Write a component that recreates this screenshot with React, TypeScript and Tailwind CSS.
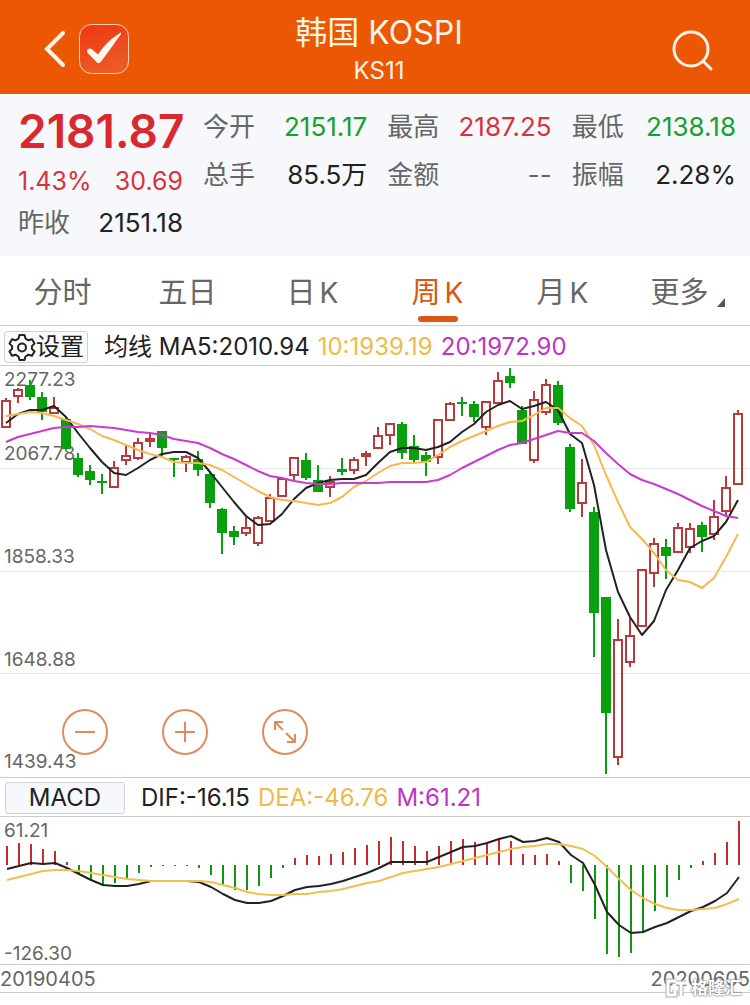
import { useState } from 'react';

type Candle = [up: 0 | 1, high: number, top: number, bottom: number, low: number];

// Chart positions, one entry per week
const CANDLES: Candle[] = [
  [1, 398, 400, 428, 428], [1, 388, 389, 397, 403], [0, 380, 385, 397, 400], [0, 392, 397, 412, 420],
  [1, 397, 407, 414, 414], [0, 417, 419, 449, 449], [0, 453, 458, 475, 477], [0, 465, 471, 480, 485],
  [0, 474, 481, 483, 494], [1, 461, 467, 488, 488], [1, 445, 455, 461, 465], [1, 438, 442, 459, 460],
  [1, 433, 438, 442, 447], [0, 431, 431, 448, 458], [0, 458, 458, 460, 477], [1, 455, 456, 463, 472],
  [0, 451, 459, 470, 476], [0, 472, 474, 503, 508], [0, 508, 509, 533, 554], [0, 526, 531, 537, 545],
  [1, 517, 527, 534, 536], [1, 516, 517, 544, 546], [1, 494, 497, 522, 522], [1, 478, 478, 497, 497],
  [1, 457, 457, 476, 480], [0, 453, 460, 478, 480], [0, 465, 480, 492, 492], [1, 476, 481, 488, 497],
  [0, 458, 469, 472, 475], [1, 457, 459, 471, 474], [1, 451, 453, 457, 466], [1, 427, 435, 449, 449],
  [1, 423, 423, 436, 445], [0, 422, 424, 453, 459], [0, 435, 446, 460, 462], [0, 452, 455, 462, 476],
  [1, 419, 419, 458, 464], [1, 402, 403, 421, 421], [0, 397, 402, 404, 416], [0, 401, 404, 417, 422],
  [1, 401, 401, 428, 435], [1, 372, 380, 404, 404], [0, 368, 376, 383, 388], [0, 406, 410, 444, 444],
  [1, 391, 399, 461, 463], [1, 379, 384, 413, 415], [0, 381, 385, 423, 425], [0, 444, 447, 509, 512],
  [1, 459, 482, 504, 517], [0, 507, 512, 613, 657], [0, 597, 597, 713, 774], [1, 619, 639, 758, 765],
  [1, 618, 635, 663, 667], [1, 569, 569, 627, 627], [1, 538, 543, 574, 587], [0, 539, 547, 556, 579],
  [1, 523, 527, 553, 553], [1, 523, 528, 548, 553], [0, 522, 525, 537, 552], [1, 500, 516, 535, 540],
  [1, 476, 487, 512, 516], [1, 410, 413, 485, 485],
];

const MA5 = [
  423, 414, 410, 410, 406, 417, 433, 448, 462, 473, 475, 468, 460, 454, 452, 452, 458, 472, 487, 502, 516,
  525, 524, 514, 499, 488, 483, 480, 479, 479, 475, 463, 452, 448, 448, 450, 447, 442, 432, 424, 412, 405,
  401, 409, 406, 402, 410, 434, 443, 485, 550, 592, 617, 635, 621, 590, 570, 548, 541, 536, 522, 500,
];
const MA10 = [
  416, 414, 412, 413, 416, 420, 424, 429, 436, 440, 445, 450, 454, 457, 462, 463, 463, 465, 470, 477, 484,
  491, 497, 500, 501, 503, 505, 503, 497, 487, 481, 473, 466, 463, 463, 462, 455, 447, 441, 436, 431, 426,
  422, 421, 415, 408, 408, 418, 426, 445, 475, 502, 527, 539, 553, 570, 580, 582, 588, 578, 557, 534,
];
const MA20 = [
  442, 437, 434, 431, 428, 427, 427, 426, 427, 428, 430, 432, 433, 435, 439, 441, 443, 448, 454, 459, 465,
  471, 476, 478, 481, 483, 484, 484, 483, 483, 483, 483, 482, 482, 482, 482, 480, 475, 468, 462, 456, 450,
  445, 443, 439, 435, 431, 433, 433, 441, 453, 464, 474, 480, 484, 489, 494, 500, 506, 511, 516, 518,
];

const ZERO = 865;
const BARS = [
  846, 843, 844, 849, 851, 862, 874, 880, 885, 883, 878, 873, 867, 866, 866, 866, 868, 875, 884, 890, 890,
  886, 878, 868, 858, 855, 856, 854, 852, 848, 845, 841, 837, 841, 846, 851, 846, 841, 839, 842, 843, 838,
  841, 854, 855, 854, 861, 883, 891, 919, 954, 957, 953, 932, 911, 897, 880, 868, 861, 853, 842, 821,
];
const DIF = [
  869, 866, 863, 864, 863, 868, 874, 880, 885, 886, 886, 884, 881, 881, 881, 881, 882, 887, 894, 900, 903,
  903, 901, 896, 890, 887, 886, 884, 881, 877, 873, 868, 862, 862, 862, 862, 857, 852, 847, 846, 843, 839,
  836, 842, 841, 838, 842, 855, 863, 885, 912, 925, 933, 932, 927, 923, 917, 911, 907, 901, 893, 877,
];
const DEA = [
  880, 877, 874, 871, 870, 870, 871, 873, 875, 877, 879, 880, 881, 881, 881, 881, 881, 882, 885, 888, 892,
  894, 895, 895, 894, 894, 892, 891, 889, 886, 883, 881, 877, 873, 871, 869, 867, 864, 861, 858, 855, 852,
  849, 847, 846, 844, 844, 846, 849, 856, 867, 879, 890, 898, 904, 908, 910, 910, 909, 908, 904, 899,
];

const PRICE_LABELS: [string, number][] = [
  ['2277.23', 386],
  ['2067.78', 460],
  ['1858.33', 563],
  ['1648.88', 666],
  ['1439.43', 768],
];

const TABS = ['分时', '五日', '日K', '周K', '月K', '更多'];

const STATS = [
  { label: '今开', value: '2151.17', color: 'text-[#18a02a]' },
  { label: '最高', value: '2187.25', color: 'text-[#d7333c]' },
  { label: '最低', value: '2138.18', color: 'text-[#18a02a]' },
  { label: '总手', value: '85.5万', color: 'text-[#222]' },
  { label: '金额', value: '--', color: 'text-[#666]' },
  { label: '振幅', value: '2.28%', color: 'text-[#222]' },
];

const toPoints = (ys: number[], start: number) =>
  ys.map((y, i) => `${start + i * 12},${y}`).join(' ');

function Line({ ys, color, start }: { ys: number[]; color: string; start: number }) {
  return (
    <polyline
      points={toPoints(ys, start)}
      fill="none"
      stroke={color}
      strokeWidth="2"
      strokeLinejoin="round"
    />
  );
}

function Header() {
  return (
    <header className="flex h-[94px] items-center justify-between bg-[#eb5703] pr-9 pl-11 text-[#fff4e6]">
      <div className="flex flex-1 items-center gap-3">
        <button aria-label="返回" className="pt-1">
          <svg width="23" height="38" viewBox="0 0 23 38" fill="none" stroke="currentColor" strokeWidth="4">
            <path d="M19 3 3 19l16 16" strokeLinecap="round" strokeLinejoin="miter" />
          </svg>
        </button>
        <button aria-label="自选" className="pt-1">
          <svg width="50" height="50" viewBox="0 0 50 50">
            <defs>
              <linearGradient id="badge" x1="0" y1="0" x2="0.3" y2="1">
                <stop offset="0" stopColor="#ee3712" />
                <stop offset="1" stopColor="#ec5a26" />
              </linearGradient>
            </defs>
            <rect x="0.5" y="0.5" width="49" height="49" rx="12" fill="url(#badge)" stroke="#ffd3b0" />
            <path
              d="M8 27c0-2.500 3-3.500 5-1.700l6 5.200C25 21.500 32 14.500 41 9c1-.5 1.500.3 1 1.200C36 18 30 27 22 37.500c-1.300 2-3.500 2-5 0L8.700 29Q8 28 8 27Z"
              fill="#fff8ee"
            />
          </svg>
        </button>
      </div>
      <div className="pt-2 text-center">
        <h1 className="text-[32px] leading-10">韩国 KOSPI</h1>
        <p className="text-2xl leading-9">KS11</p>
      </div>
      <div className="flex flex-1 justify-end pt-2">
        <button aria-label="搜索">
          <svg width="42" height="42" viewBox="0 0 42 42" fill="none" stroke="currentColor" strokeWidth="3">
            <circle cx="19" cy="19" r="17" />
            <path d="m31 31 8 8" strokeLinecap="round" />
          </svg>
        </button>
      </div>
    </header>
  );
}

function Quote() {
  return (
    <section className="flex h-[162px] gap-4 bg-[#f6f8fb] pr-[14px] pl-[18px] text-[26px]">
      <div className="w-[169px] shrink-0">
        <div className="pt-2 text-[46px] leading-[58px] font-semibold text-[#d9282e]">2181.87</div>
        <div className="flex h-11 items-center justify-between pr-1 text-[25px] text-[#d7333c]">
          <span>1.43%</span>
          <span>30.69</span>
        </div>
        <dl className="flex h-9 items-center justify-between pr-1">
          <dt className="text-[#666]">昨收</dt>
          <dd className="text-[#222]">2151.18</dd>
        </dl>
      </div>
      <dl className="grid flex-1 grid-cols-3 content-start gap-x-5 pt-2">
        {STATS.map((s) => (
          <div key={s.label} className="flex h-12 items-center justify-between whitespace-nowrap">
            <dt className="text-[#666]">{s.label}</dt>
            <dd className={s.color}>{s.value}</dd>
          </div>
        ))}
      </dl>
    </section>
  );
}

function Tabs() {
  const [active, setActive] = useState('周K');

  return (
    <nav className="grid h-[70px] grid-cols-6 border-b border-[#ccc] text-[29px]">
      {TABS.map((tab) => (
        <button
          key={tab}
          onClick={() => setActive(tab)}
          className={`relative flex items-center justify-center gap-1 pt-1 ${
            tab === active ? 'text-[#d8590f]' : 'text-[#666]'
          }`}
        >
          {tab.endsWith('K') ? (
            <>
              <span>{tab[0]}</span>
              <span className="text-[28px]">K</span>
            </>
          ) : (
            <span>{tab}</span>
          )}
          {tab === '更多' && (
            <svg width="8" height="9" viewBox="0 0 8 9" className="ml-1 mt-5">
              <path d="M8 0v9H0z" fill="#555" />
            </svg>
          )}
          {tab === active && (
            <span className="absolute bottom-[3px] left-1/2 h-[6px] w-10 -translate-x-1/2 rounded-full bg-[#d8590f]" />
          )}
        </button>
      ))}
    </nav>
  );
}

function PriceChart() {
  const zoomButton =
    'flex size-[46px] items-center justify-center rounded-full border-2 border-[#e08a60] text-[#e08a60]';

  return (
    <div className="relative border-b border-[#ccc]">
      <svg viewBox="0 366 750 411" className="block w-full">
        {[468, 571, 673].map((y) => (
          <path key={y} d={`M0 ${y}.5h750`} stroke="#e8e8e8" />
        ))}
        {PRICE_LABELS.map(([label, y]) => (
          <text key={label} x="4" y={y} fontSize="19" fill="#666">
            {label}
          </text>
        ))}
        {CANDLES.map(([up, high, top, bottom, low], i) => {
          const x = 6 + i * 12;
          return up ? (
            <g key={i} fill="none" stroke="#b83a3a" strokeWidth="2">
              <path d={`M${x} ${high}V${top + 1}M${x} ${bottom - 1}V${low}`} />
              <rect x={x - 4} y={top + 1} width="8" height={bottom - top - 2} />
            </g>
          ) : (
            <g key={i} fill="#08a00c">
              <rect x={x - 1} y={high} width="2" height={low - high} />
              <rect x={x - 5} y={top} width="10" height={bottom - top} />
            </g>
          );
        })}
        <Line ys={MA5} color="#222" start={6} />
        <Line ys={MA10} color="#f5b94f" start={6} />
        <Line ys={MA20} color="#c83bd0" start={6} />
      </svg>
      <div className="absolute bottom-[22px] left-[62px] flex gap-[54px]">
        <button aria-label="缩小" className={zoomButton}>
          <svg width="22" height="22" viewBox="0 0 22 22" stroke="currentColor" strokeWidth="2">
            <path d="M1 11h20" />
          </svg>
        </button>
        <button aria-label="放大" className={zoomButton}>
          <svg width="22" height="22" viewBox="0 0 22 22" stroke="currentColor" strokeWidth="2">
            <path d="M1 11h20M11 1v20" />
          </svg>
        </button>
        <button aria-label="全屏" className={zoomButton}>
          <svg width="24" height="24" viewBox="0 0 24 24" fill="none" stroke="currentColor" strokeWidth="2">
            <path d="M2 10V2h8M2 2l8 8M22 14v8h-8M22 22l-9-9" />
          </svg>
        </button>
      </div>
    </div>
  );
}

function MacdChart() {
  return (
    <svg viewBox="0 817 750 147" className="block w-full overflow-visible">
      <text x="4" y="837" fontSize="19" fill="#666">61.21</text>
      <text x="4" y="960" fontSize="19" fill="#666">-126.30</text>
      {BARS.map((y, i) => (
        <path
          key={i}
          d={`M${7 + i * 12} ${ZERO}V${y}`}
          stroke={y < ZERO ? '#c92a2a' : '#0f960f'}
          strokeWidth="2"
        />
      ))}
      <Line ys={DIF} color="#222" start={7} />
      <Line ys={DEA} color="#f0c04f" start={7} />
    </svg>
  );
}

function Watermark() {
  return (
    <div className="absolute right-2 bottom-[-8px] flex items-center gap-1 text-[17px] leading-6 font-bold text-white [text-shadow:0_0_2px_#666,0_0_2px_#888]">
      <svg width="22" height="20" viewBox="0 0 22 20" fill="none">
        <path d="M11 3H3v14h7v-5M11 5h10M16 5v13" stroke="#aaa" strokeWidth="5" />
        <path d="M11 3H3v14h7v-5M11 5h10M16 5v13" stroke="#fff" strokeWidth="3" />
      </svg>
      <span>格隆汇</span>
    </div>
  );
}

export default function App() {
  return (
    <main className="min-h-screen bg-white font-['Inter','Noto_Sans_CJK_SC',sans-serif] font-normal text-[#222]">
      <Header />
      <Quote />
      <Tabs />
      <div className="flex h-10 items-center gap-2 border-b border-[#ccc] pt-[2px] pl-1 text-2xl whitespace-nowrap">
        <button className="mr-2 flex h-8 w-[84px] items-center justify-center rounded-[3px] border border-[#ccd2d8] bg-[#f8fafc]">
          <svg width="28" height="28" viewBox="0 0 28 28" fill="none" stroke="currentColor" strokeWidth="2">
            <path
              d="M11.500 2h5l1 3.600 3 1.700 3.500-1 2.500 4.300-2.600 2.500v2.800l2.600 2.600-2.500 4.200-3.500-1-3 1.800-1 3.500h-5l-1-3.500-3-1.800-3.500 1-2.500-4.200 2.600-2.600v-2.800l-2.600-2.500L4 6.300l3.500 1 3-1.700Z"
              strokeLinejoin="round"
            />
            <circle cx="14" cy="14.500" r="4" />
          </svg>
          设置
        </button>
        <span>均线 MA5:2010.94</span>
        <span className="text-[#edbb4a]">10:1939.19</span>
        <span className="text-[#bd35c4]">20:1972.90</span>
      </div>
      <PriceChart />
      <div className="flex h-[39px] items-center gap-2 border-b border-[#ccc] pt-[2px] pl-[5px] text-2xl whitespace-nowrap">
        <button className="mr-2 h-8 w-[120px] rounded-[3px] border border-[#ccd2d8] bg-[#f6f8fb] leading-[30px]">MACD</button>
        <span>DIF:-16.15</span>
        <span className="text-[#edbb4a]">DEA:-46.76</span>
        <span className="text-[#bd35c4]">M:61.21</span>
      </div>
      <MacdChart />
      <div className="relative flex h-[29px] items-center justify-between border-y border-[#ccc] text-xl text-[#666]">
        <time dateTime="2019-04-05">20190405</time>
        <time dateTime="2020-06-05">20200605</time>
        <Watermark />
      </div>
    </main>
  );
}
